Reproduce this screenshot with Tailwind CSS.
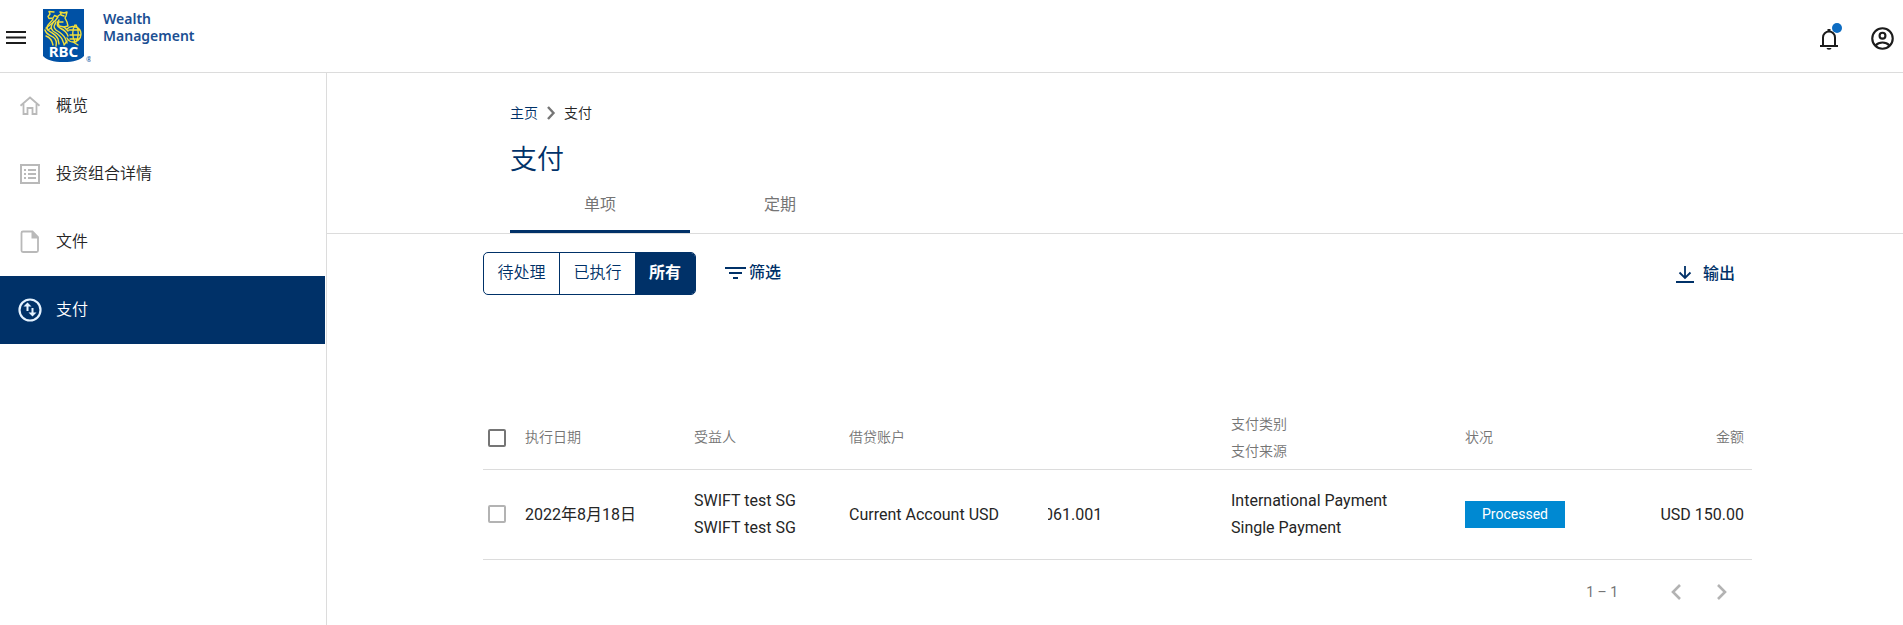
<!DOCTYPE html>
<html lang="zh-CN">
<head>
  <meta charset="UTF-8" />
  <meta name="viewport" content="width=device-width, initial-scale=1.0"/>
  <title>支付 - RBC Wealth Management</title>
  <script src="https://cdn.jsdelivr.net/npm/@tailwindcss/browser@4"></script>
</head>
<body class="flex min-h-screen flex-col bg-white font-[Roboto,'Noto_Sans_CJK_SC',sans-serif] text-base text-[#252525]">

  <header class="flex h-[73px] items-start border-b border-[#dcdcdc] pl-1">
    <button type="button" aria-label="菜单" class="mt-[26px]">
      <svg class="size-6" viewBox="0 0 24 24" fill="#1c1c1c"><path d="M2 5h20v2H2zM2 10.500h20v2H2zM2 16h20v2H2z"/></svg>
    </button>
    <a href="#" class="mt-2 ml-[15px] flex text-[#1b4f93]">
      <svg class="h-14 w-12" viewBox="0 0 48 56" role="img" aria-label="RBC">
        <path d="M0 1h41v47c-4 4-10 6-20.500 6S4 52 0 48z" fill="#0051a5"/>
        <g fill="none" stroke="#f3df3a" stroke-width="1.400" stroke-linecap="round" stroke-linejoin="round">
          <!-- head and mane -->
          <path d="M11 4 6 3.500 7 6l-2 2.500 1 2 4-.5 1.500-2.500L15 9l-3 4-5 4-4 3 2 2 3-2"/>
          <path d="M10 11c-3 5-8 7-5 11 3 3 8 4 10 9l1 5"/>
          <path d="M11 13c-3 5-4 7-1 10 3 2 7 4 9 8l2 5"/>
          <path d="M13 14c-2 4-3 5 0 8 3 2 7 4 9 8l2 5"/>
          <path d="M16 12c-3 4-2 6 1 8 4 2 7 4 8 8"/>
          <path d="M3 28c3 1 6 4 7 9M2 22c1 4 4 5 8 7 3 2 4 5 3 9"/>
          <!-- raised paw -->
          <path d="M15 8l3-2-1-2 4 1 3-1-1 4-1 2 2 4 1 4-4 1-5-1-1-4 5 0M18 7l3 1"/>
          <!-- globe -->
          <path d="M24 21c5-5 14-2 14 5 0 5-4 8-8 8s-5-2-6-4M26 22h11M27 27h11M27 31h9M32 17c-3 4-3 12 0 17M33 17c3 4 3 12 0 17M21 19l4 4M24 33l-3 4M30 34l5 3"/>
        </g>
        <text x="20.500" y="49" text-anchor="middle" font-family="Noto Sans, sans-serif" font-weight="700" font-size="15" fill="#fff">RBC</text>
        <text x="43" y="54" font-family="Noto Sans, sans-serif" font-size="7" fill="#0051a5">®</text>
      </svg>
      <span class="ml-3 pt-0.5 font-['Noto_Sans'] text-sm/[17px] font-semibold">Wealth<br>Management</span>
    </a>
    <div class="mt-[25px] mr-[7px] ml-auto flex gap-[27px]">
      <button type="button" aria-label="通知" class="relative">
        <svg class="size-[26px]" viewBox="0 0 26 26">
          <path d="M7 19V11.500a6 6 0 0 1 12 0V19M4 20h18" fill="none" stroke="#1c1c1c" stroke-width="2"/>
          <path d="M11.500 3h3v3h-3zM10.500 22h5a2.500 1.800 0 0 1-5 0z" fill="#1c1c1c"/>
        </svg>
        <span class="absolute -top-0.5 right-0 size-2.5 rounded-full bg-[#0d6cc2]"></span>
      </button>
      <button type="button" aria-label="账户">
        <svg class="size-[27px]" viewBox="0 0 24 24" fill="none" stroke="#1c1c1c" stroke-width="1.900"><circle cx="12" cy="12" r="9.100"/><circle cx="12" cy="9.500" r="2.600"/><path d="M5.800 18.200C9 14.700 15 14.700 18.200 18.200"/></svg>
      </button>
    </div>
  </header>

  <div class="flex grow">
    <nav class="-mt-px w-[327px] shrink-0 border-r border-[#dcdcdc] pr-px font-[350]">
      <a href="#" class="flex h-17 items-center gap-3.5 pl-[18px]">
        <svg class="size-6" viewBox="0 0 24 24" fill="none" stroke="#b9b9b9" stroke-width="1.800"><path d="M2.500 11.800 12 3.500l9.500 8.300M5.500 10v10h4v-6h5v6h4V10"/></svg>
        概览
      </a>
      <a href="#" class="flex h-17 items-center gap-3.5 pl-[18px]">
        <svg class="size-6" viewBox="0 0 24 24" fill="#b9b9b9"><path d="M2 2h20v20H2zM4 4v16h16V4z" fill-rule="evenodd"/><path d="M6 7h2v2H6zM6 11h2v2H6zM6 15h2v2H6zM10 7h8v2h-8zM10 11h8v2h-8zM10 15h8v2h-8z"/></svg>
        投资组合详情
      </a>
      <a href="#" class="flex h-17 items-center gap-3.5 pl-[18px]">
        <svg class="size-6" viewBox="0 0 24 24"><path d="M5 1.500h9.500L20 7v13.500a1.500 1.500 0 0 1-1.500 1.500H5a1.500 1.500 0 0 1-1.500-1.500V3A1.500 1.500 0 0 1 5 1.500z" fill="none" stroke="#b9b9b9" stroke-width="1.800"/><path d="M13.500 1v7.500H21z" fill="#b9b9b9"/></svg>
        文件
      </a>
      <a href="#" aria-current="page" class="flex h-17 items-center gap-3.5 bg-[#003168] pl-[18px] text-white">
        <svg class="size-6" viewBox="0 0 24 24" fill="#e4f2ff"><circle cx="12" cy="12" r="10.500" fill="none" stroke="#e4f2ff" stroke-width="2.200"/><path d="M9.500 4.500 5.500 8.500h3V13h2V8.500h3zM14.500 18.500l4-4h-3V10h-2v4.500h-3z"/></svg>
        支付
      </a>
    </nav>

    <main class="grow">
      <div class="border-b border-[#dcdcdc] pl-[183px] font-[350]">
        <div class="flex items-center gap-2 pt-[30px] text-sm">
          <a href="#" class="text-[#003168]">主页</a>
          <svg class="h-3.5 w-2.5" viewBox="0 0 10 14" fill="none" stroke="#757575" stroke-width="2.400"><path d="m2 1 5.500 6L2 13"/></svg>
          <span>支付</span>
        </div>
        <h1 class="mt-[17px] text-[27px]/10 text-[#003168]">支付</h1>
        <div role="tablist" class="flex text-[#757575]">
          <button type="button" role="tab" aria-selected="true" class="h-[53px] w-[180px] border-b-3 border-[#003168] font-normal">单项</button>
          <button type="button" role="tab" aria-selected="false" class="h-[53px] w-[180px] border-b-3 border-transparent font-normal">定期</button>
        </div>
      </div>

      <div class="pt-[18px] pr-[151px] pl-39">
        <div class="flex items-center text-[#003168]">
          <div class="flex h-[43px] overflow-hidden rounded-[5px] border border-[#003168]">
            <button type="button" class="w-[76px] border-r border-[#003168] pb-0.5 font-[350]">待处理</button>
            <button type="button" class="w-[75px] pb-0.5 font-[350]">已执行</button>
            <button type="button" class="w-[60px] bg-[#003168] pb-0.5 font-bold text-white">所有</button>
          </div>
          <button type="button" class="ml-[29px] flex items-center gap-0.5 pb-0.5 font-medium">
            <svg class="h-6 w-[22px]" viewBox="0 0 22 24" fill="#003168"><path d="M0 6h21v2H0zM4 11h13v2H4zM8 16h5v2H8z"/></svg>
            筛选
          </button>
          <button type="button" class="mr-[17px] ml-auto flex items-center gap-2 font-medium">
            <svg class="size-5" viewBox="0 0 20 20" fill="none" stroke="#003168" stroke-width="1.800"><path d="M10 2v12M4.500 8.500 10 14l5.500-5.500M1 18h18"/></svg>
            输出
          </button>
        </div>

        <table class="mt-[114px] w-full table-fixed text-left leading-[27px]">
          <colgroup>
            <col class="w-[42px]"><col class="w-[169px]"><col class="w-[155px]"><col class="w-[199px]"><col class="w-[183px]"><col class="w-[234px]"><col class="w-[120px]"><col>
          </colgroup>
          <thead class="border-b border-[#dcdcdc] text-sm/[27px] text-[#757575]">
            <tr class="h-[60px] *:pb-0.5 *:font-[350]">
              <th class="pl-[5px]"><input type="checkbox" aria-label="全选" class="block size-[18px] appearance-none rounded-xs border-2 border-[#757575]"></th>
              <th>执行日期</th>
              <th>受益人</th>
              <th colspan="2">借贷账户</th>
              <th>支付类别<br>支付来源</th>
              <th>状况</th>
              <th class="pr-2 text-right">金额</th>
            </tr>
          </thead>
          <tbody>
            <tr class="h-[90px] border-b border-[#dcdcdc]">
              <td class="pl-[5px]"><input type="checkbox" aria-label="选择付款" class="block size-[18px] appearance-none rounded-xs border-2 border-[#b3b3b3]"></td>
              <td>2022年8月18日</td>
              <td>SWIFT test SG<br>SWIFT test SG</td>
              <td>Current Account USD</td>
              <td><div class="overflow-hidden"><span class="-ml-1">061.001</span></div></td>
              <td>International Payment<br>Single Payment</td>
              <td><span class="block w-[100px] bg-[#0089d2] text-center text-sm/[27px] text-white">Processed</span></td>
              <td class="pr-2 text-right">USD 150.00</td>
            </tr>
          </tbody>
        </table>

        <div class="flex items-center justify-end pt-5 pr-[18px] text-sm text-[#757575]">
          <span class="mr-[46px]">1 – 1</span>
          <button type="button" aria-label="上一页" disabled class="mr-[22px]">
            <svg class="size-6" viewBox="0 0 24 24" fill="none" stroke="#b3b3b3" stroke-width="2.600"><path d="m16 5-7 7 7 7"/></svg>
          </button>
          <button type="button" aria-label="下一页" disabled>
            <svg class="size-6" viewBox="0 0 24 24" fill="none" stroke="#b3b3b3" stroke-width="2.600"><path d="m8 5 7 7-7 7"/></svg>
          </button>
        </div>
      </div>
    </main>
  </div>

</body>
</html>
